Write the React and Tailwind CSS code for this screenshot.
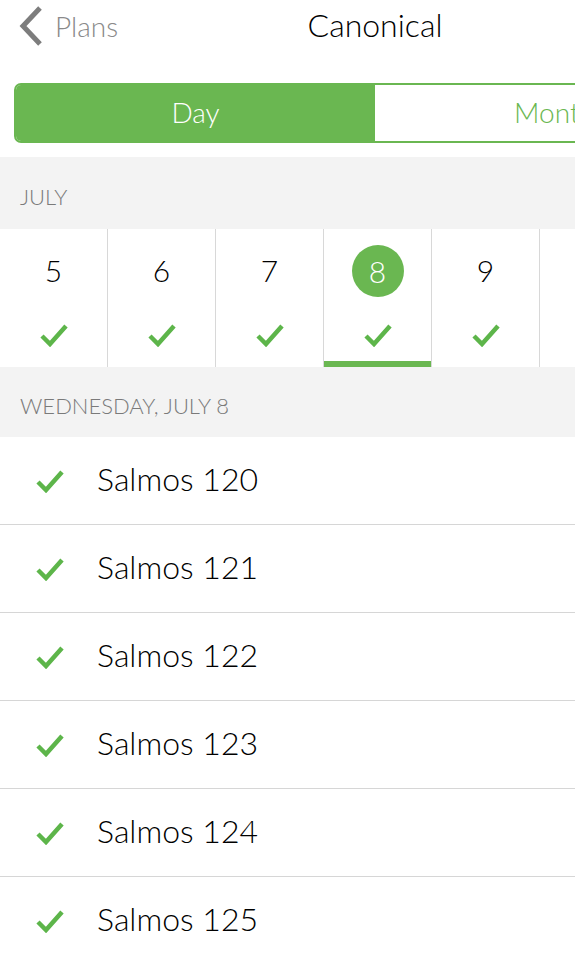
const font = { fontFamily: 'Lato, "Noto Sans", sans-serif' };

const Check = ({ className }) => (
  <svg viewBox="0 0 28 24" className={className} fill="none">
    <path d="M2 13 L10 21 L26 3" stroke="#5db54a" strokeWidth="4.5" strokeLinejoin="miter" />
  </svg>
);

const days = [5, 6, 7, 8, 9, 10];
const readings = ['Salmos 120', 'Salmos 121', 'Salmos 122', 'Salmos 123', 'Salmos 124', 'Salmos 125'];

export default function App() {
  return (
    <div className="h-[959px] w-[575px] overflow-hidden bg-white font-light" style={font}>
      <div className="w-[750px]">
        {/* nav bar */}
        <div className="relative flex h-[83px] items-start">
          <div className="flex items-center pl-[18px] pt-[5px]">
            <svg viewBox="0 0 26 42" className="h-[42px] w-[26px]" fill="none">
              <path d="M22 3 L5 21 L22 39" stroke="#7d7d7d" strokeWidth="5" />
            </svg>
            <span className="ml-[11px] text-[28px] text-[#8a8a8a]">Plans</span>
          </div>
          <div className="absolute left-0 right-0 top-[1px] text-center text-[32px] text-black">Canonical</div>
        </div>

        {/* segmented control */}
        <div className="mx-[14px] flex h-[60px] overflow-hidden rounded-[7px] border-2 border-[#6ab751]">
          <div className="flex w-1/2 items-center justify-center bg-[#6ab751] pb-[2px] text-[28px] text-white">Day</div>
          <div className="flex w-1/2 items-center justify-center bg-white pb-[2px] text-[28px] text-[#6ab751]">Month</div>
        </div>

        <div className="mt-[14px] flex h-[72px] items-center bg-[#f3f3f3] pl-[20px] pt-[6px] text-[22px] text-[#7a7a7a]">JULY</div>

        {/* day strip */}
        <div className="flex h-[138px]">
          {days.map((d) => (
            <div key={d} className={`relative flex w-[108px] shrink-0 flex-col items-center border-r border-[#d8d8d8] ${d === 10 ? 'opacity-0' : ''}`}>
              {d === 8 ? (
                <div className="mt-[16px] flex h-[52px] w-[52px] items-center justify-center rounded-full bg-[#6ab751] text-[30px] text-white">{d}</div>
              ) : (
                <div className="mt-[15px] flex h-[52px] items-center text-[30px] text-black">{d}</div>
              )}
              <Check className={d === 8 ? 'mt-[26px] h-[24px] w-[28px]' : 'mt-[27px] h-[24px] w-[28px]'} />
              {d === 8 && <div className="absolute bottom-0 left-0 right-0 h-[6px] bg-[#6ab751]" />}
            </div>
          ))}
        </div>

        <div className="flex h-[70px] items-center bg-[#f3f3f3] pl-[20px] pt-[6px] text-[22px] text-[#7a7a7a]">WEDNESDAY, JULY 8</div>

        {readings.map((r) => (
          <div key={r} className="flex h-[88px] items-center border-b border-[#d6d6d6] pl-[34px]">
            <Check className="h-[24px] w-[32px]" />
            <span className="ml-[31px] pb-[3px] text-[32px] text-black">{r}</span>
          </div>
        ))}
      </div>
    </div>
  );
}
